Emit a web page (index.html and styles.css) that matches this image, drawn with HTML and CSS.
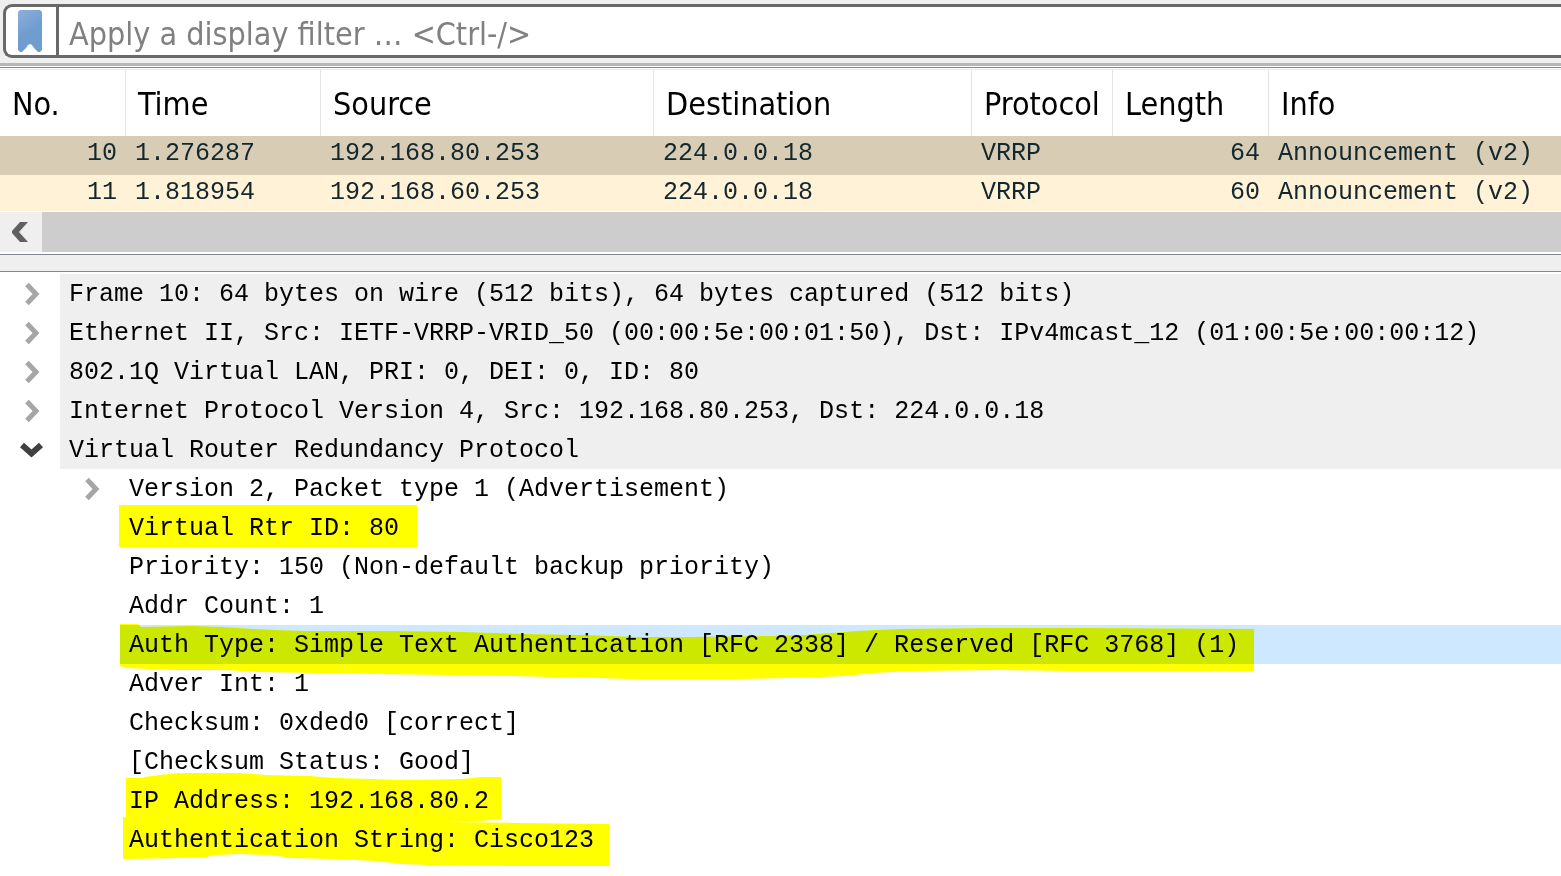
FILE: index.html
```html
<!DOCTYPE html>
<html lang="en">
<head>
  <meta charset="UTF-8" />
  <title>VRRP capture</title>
  <meta name="viewport" content="width=device-width, initial-scale=1" />
  <link rel="stylesheet" href="styles.css">
</head>
<body>
  <svg class="defs" aria-hidden="true">
    <symbol id="closed" viewBox="0 0 24 24"><path d="M7 2.5L16 12L7 21.5" fill="none" stroke="#a6a6a6" stroke-width="5"/></symbol>
    <symbol id="open" viewBox="0 0 24 24"><path d="M2 7L11.5 15.5L21 7" fill="none" stroke="#404040" stroke-width="6"/></symbol>
  </svg>

  <div class="toolbar">
    <div class="filter">
      <button class="bookmark" aria-label="Bookmarks">
        <svg width="24" height="42" viewBox="0 0 24 42">
          <defs>
            <linearGradient id="blue" x1="0" y1="0" x2="0.4" y2="1">
              <stop offset="0" stop-color="#8db0d9"/>
              <stop offset="0.6" stop-color="#709dd0"/>
            </linearGradient>
          </defs>
          <path d="M2 0H22L24 2V40L22 42H20L16 38L14 35L12 34L10 35L8 38L4 42H2L0 40V2Z" fill="url(#blue)"/>
        </svg>
      </button>
      <input type="text" aria-label="Display filter" placeholder="Apply a display filter … &lt;Ctrl-/&gt;">
    </div>
  </div>

  <div class="packets">
    <table>
      <colgroup>
        <col class="c-no"><col class="c-time"><col class="c-source"><col class="c-dest"><col class="c-proto"><col class="c-length"><col>
      </colgroup>
      <thead>
        <tr><th>No.</th><th>Time</th><th>Source</th><th>Destination</th><th>Protocol</th><th>Length</th><th>Info</th></tr>
      </thead>
      <tbody>
        <tr class="current"><td class="num">10</td><td>1.276287</td><td>192.168.80.253</td><td>224.0.0.18</td><td>VRRP</td><td class="num">64</td><td>Announcement (v2)</td></tr>
        <tr><td class="num">11</td><td>1.818954</td><td>192.168.60.253</td><td>224.0.0.18</td><td>VRRP</td><td class="num">60</td><td>Announcement (v2)</td></tr>
      </tbody>
    </table>
    <div class="scrollbar">
      <button aria-label="Scroll left">
        <svg width="16" height="20" viewBox="0 0 16 20"><path d="M8 0H16L7 10L16 20H8L0 11V9Z" fill="#606060"/></svg>
      </button>
      <div class="thumb"></div>
    </div>
  </div>

  <div class="splitter"></div>

  <ul class="tree">
    <li>
      <div class="row proto"><button aria-label="Expand"><svg><use href="#closed"/></svg></button><span class="label">Frame 10: 64 bytes on wire (512 bits), 64 bytes captured (512 bits)</span></div>
    </li>
    <li>
      <div class="row proto"><button aria-label="Expand"><svg><use href="#closed"/></svg></button><span class="label">Ethernet II, Src: IETF-VRRP-VRID_50 (00:00:5e:00:01:50), Dst: IPv4mcast_12 (01:00:5e:00:00:12)</span></div>
    </li>
    <li>
      <div class="row proto"><button aria-label="Expand"><svg><use href="#closed"/></svg></button><span class="label">802.1Q Virtual LAN, PRI: 0, DEI: 0, ID: 80</span></div>
    </li>
    <li>
      <div class="row proto"><button aria-label="Expand"><svg><use href="#closed"/></svg></button><span class="label">Internet Protocol Version 4, Src: 192.168.80.253, Dst: 224.0.0.18</span></div>
    </li>
    <li>
      <div class="row proto"><button aria-label="Collapse"><svg><use href="#open"/></svg></button><span class="label">Virtual Router Redundancy Protocol</span></div>
      <ul>
        <li><div class="row"><button aria-label="Expand"><svg><use href="#closed"/></svg></button><span class="label">Version 2, Packet type 1 (Advertisement)</span></div></li>
        <li><div class="row"><span class="label">Virtual Rtr ID: 80
          <svg class="marker"><path d="M-1 -3H297V39H-1Z"/></svg></span></div></li>
        <li><div class="row"><span class="label">Priority: 150 (Non-default backup priority)</span></div></li>
        <li><div class="row"><span class="label">Addr Count: 1</span></div></li>
        <li><div class="row selected"><span class="label">Auth Type: Simple Text Authentication [RFC 2338] / Reserved [RFC 3768] (1)
          <svg class="marker"><path d="M0 -1H18L21 2L71 1L102 2L134 4L156 5L184 6H270L344 7L404 9L458 10L520 12H570L650 11L684 10L711 8L737 6L755 5L781 4L865 3H968L1134 4V46H953L880 45L795 46L752 48L726 51L699 52L666 53L618 54H512L476 53L390 51L330 50L255 49L140 47L104 45H53L6 43L0 41Z"/></svg></span></div></li>
        <li><div class="row"><span class="label">Adver Int: 1</span></div></li>
        <li><div class="row"><span class="label">Checksum: 0xded0 [correct]</span></div></li>
        <li><div class="row"><span class="label">[Checksum Status: Good]</span></div></li>
        <li><div class="row"><span class="label">IP Address: 192.168.80.2
          <svg class="marker"><path d="M6 -3H22L24 -4L40 -6L58 -8H120L145 -6L189 -5L215 -3L287 -1L340 -2L353 -3L361 -4H381V38L372 39L358 40L324 41H6Z"/></svg></span></div></li>
        <li><div class="row"><span class="label">Authentication String: Cisco123
          <svg class="marker"><path d="M3 -3H300L324 2L400 3L489 4V46H385L309 45L282 44L256 41L215 39L170 38L153 35L120 34L95 35L86 37L62 38L3 39Z"/></svg></span></div></li>
      </ul>
    </li>
  </ul>
</body>
</html>
```
FILE: styles.css
```css
:root {
  --chrome: #efefef;
  --line: #828790;
  --ui: "DejaVu Sans Condensed", "Noto Sans", sans-serif;
  --mono: "Liberation Mono", monospace;
}
* { box-sizing: border-box; }
body {
  margin: 0;
  min-height: 100vh;
  background: #fff;
  color: #000;
  font-family: var(--mono);
  font-size: 25px;
}
button {
  display: flex;
  align-items: center;
  justify-content: center;
  flex: none;
  padding: 0;
  border: 0;
  background: none;
}
ul { list-style: none; margin: 0; padding: 0; }
.defs { display: none; }

/* filter bar */
.toolbar {
  background: var(--chrome);
  padding: 4px 0 5px 3px;
  border-bottom: 3px solid #b6b6b6;
}
.filter {
  display: flex;
  height: 54px;
  background: #fff;
  border: 3px solid #696969;
  border-right: 0;
  border-radius: 9px 0 0 9px;
}
.bookmark {
  width: 53px;
  padding-right: 2px;
  border-right: 3px solid #696969;
}
.filter input {
  flex: 1;
  min-width: 0;
  padding: 5px 10px 0;
  border: 0;
  outline: 0;
  background: none;
  font-family: var(--ui);
  font-size: 32px;
}
.filter input::placeholder { color: #808080; opacity: 1; }

/* packet list */
.packets {
  margin-top: 1px;
  border-top: 1px solid var(--line);
  border-bottom: 1px solid var(--line);
  padding: 1px 0 2px;
}
table {
  width: 100%;
  table-layout: fixed;
  border-collapse: separate;
  border-spacing: 0;
  border-top: 1px solid #ececec;
  white-space: nowrap;
}
.c-no { width: 126px; }
.c-time { width: 195px; }
.c-source { width: 333px; }
.c-dest { width: 318px; }
.c-proto { width: 141px; }
.c-length { width: 156px; }
th {
  height: 66px;
  padding: 2px 0 0 12px;
  border-right: 1px solid #e5e5e5;
  font-family: var(--ui);
  font-size: 32px;
  font-weight: 400;
  line-height: 40px;
  text-align: left;
}
th:last-child { border-right: 0; }
td {
  height: 36px;
  padding: 0 9px;
  background: #fff2d6;
  color: #12272e;
  line-height: 36px;
  vertical-align: top;
}
.current td { height: 39px; background: #d8cdb4; }
.num { text-align: right; }

.scrollbar {
  display: flex;
  height: 40px;
  margin-top: 1px;
}
.scrollbar button { width: 42px; padding-right: 2px; background: var(--chrome); }
.thumb { flex: 1; background: #cdcdcd; }

.splitter {
  height: 17px;
  background: var(--chrome);
  border-bottom: 1px solid var(--line);
}

/* packet details */
.tree { padding: 2px 0 10px; }
.tree ul { padding-left: 60px; }
.row {
  display: flex;
  height: 39px;
  line-height: 41px;
}
.row button { width: 60px; padding-left: 4px; }
.row button svg { width: 24px; height: 24px; }
.label {
  position: relative;
  flex: 1;
  padding-left: 9px;
  white-space: nowrap;
}
.label:first-child { margin-left: 60px; }
.proto .label { background: var(--chrome); }
.selected .label { background: #cde8ff; }

/* highlighter strokes laid over the text */
.marker {
  position: absolute;
  top: 0;
  left: 0;
  width: 100%;
  height: 100%;
  overflow: visible;
  fill: #ff0;
  mix-blend-mode: multiply;
  pointer-events: none;
}
```
